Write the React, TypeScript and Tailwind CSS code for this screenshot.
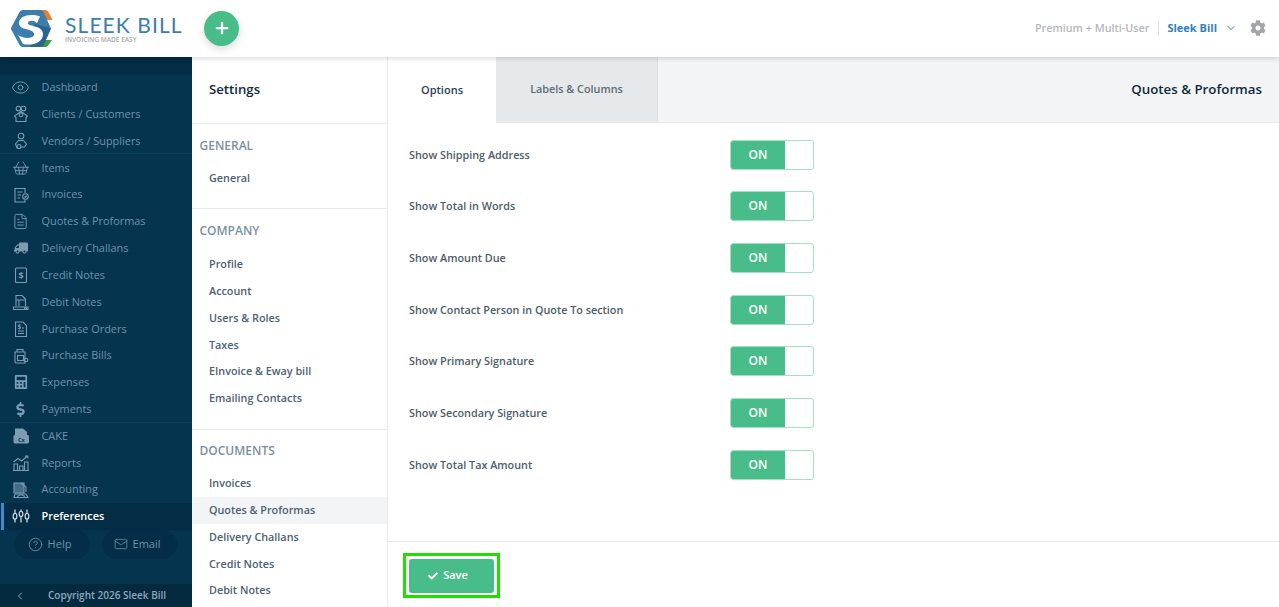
import React from "react";
import { Eye, ShoppingBasket, FileText, CircleHelp, Mail, ChevronDown, ChevronLeft, Plus } from "lucide-react";
import { FaCalculator, FaCheck, FaCog, FaDollarSign, FaTruck } from "react-icons/fa";

const S = { width: 18, height: 18, viewBox: "0 0 18 18", fill: "none", stroke: "currentColor", strokeWidth: 1.1 } as const;

const Clients = () => (
  <svg {...S}><circle cx="6.5" cy="3.5" r="2.3" /><circle cx="11.5" cy="3.5" r="2.3" /><path d="M9 6.5 L15.5 11 L14 12.5 V16.5 H4 V12.5 L2.5 11 Z" /><circle cx="9" cy="9.8" r="1.9" /></svg>
);
const Vendors = () => (
  <svg {...S}><circle cx="9" cy="4" r="2.8" /><path d="M5 16 L3.5 12 L6.5 8.5 H11.5 L14.5 12 L12.5 15 H9" /><circle cx="7" cy="14.5" r="2" /></svg>
);
const InvoiceIc = () => (
  <svg {...S}><path d="M13 7 V2.5 H3 V16 H13 V14" /><path d="M5.5 6 H10.5 M5.5 9 H9 M5.5 12 H8" /><circle cx="13.5" cy="10.5" r="2.8" /><path d="M12.3 10.5 L13.3 11.5 L14.8 9.7" /></svg>
);
const Dollar = () => (
  <svg {...S}><rect x="3.5" y="2" width="11" height="14.5" rx="1" /><text x="9" y="13" textAnchor="middle" fontSize="9" fontWeight="700" fill="currentColor" stroke="none" fontFamily="Open Sans, sans-serif">$</text></svg>
);
const Debit = () => (
  <svg {...S}><path d="M4 13 V2.5 H10 L13.5 6 V13" /><path d="M4 7 H13.5 M7 7 V13" /><path d="M1.5 14 H16 V16.5 H1.5 Z" /><circle cx="13.5" cy="15.2" r="1" /></svg>
);
const Orders = () => (
  <svg {...S}><path d="M3.5 2 H11 L14.5 5.5 V16.5 H3.5 Z" /><text x="7.4" y="9.3" textAnchor="middle" fontSize="6.5" fontWeight="700" fill="currentColor" stroke="none" fontFamily="Open Sans, sans-serif">$</text><path d="M6 11 H12 M6 13.5 H12 M10 8 H12" /></svg>
);
const Bills = () => (
  <svg {...S}><path d="M3 5 H13 V16 H4 L3 15 Z" /><path d="M5 5 V2.5 H8 M11 5 V2.5 H8" /><rect x="5.5" y="8.5" width="6" height="5" /><circle cx="14" cy="13" r="1.8" /></svg>
);
const Cake = () => (
  <svg width="18" height="18" viewBox="0 0 18 18"><path d="M3 1.5 H11 L15 5 V9 H3 Z" fill="currentColor" /><rect x="1.5" y="8" width="15.5" height="8.5" rx="1.4" fill="currentColor" /><text x="9.3" y="14.5" textAnchor="middle" fontSize="5.5" fontWeight="700" fill="#05344f" fontFamily="Open Sans, sans-serif">Cx</text></svg>
);
const Reports = () => (
  <svg {...S}><path d="M1 16.5 H17" /><path d="M2 16 V10 H5.5 V16 M7.5 16 V12 H11 V16 M12.5 16 V8 H16 V16" /><path d="M1.5 8 L6 4.5 L9.5 7 L15.5 2 M13 2 H15.8 V4.5" /></svg>
);
const Accounting = () => (
  <svg {...S}><path d="M2 2 H12 V12 H2 Z" fill="currentColor" fillOpacity={0.55} /><path d="M9 2 L14 6 V11" /><path d="M3 13 H14 L16 16.5 H2 Z" /><path d="M5 15.5 L9 13.5 L13 15.5" /></svg>
);
const Prefs = () => (
  <svg width="18" height="18" viewBox="0 0 18 18" fill="none" stroke="currentColor" strokeWidth="1.2"><path d="M3 2.5 V15.5 M9 2.5 V15.5 M15 2.5 V15.5" /><rect x="1.2" y="6.5" width="3.6" height="5.5" rx="1.7" fill="#042d45" /><rect x="7.2" y="4.5" width="3.6" height="5" rx="1.7" fill="#042d45" /><rect x="13.2" y="6.5" width="3.6" height="5.5" rx="1.7" fill="#042d45" /></svg>
);

const nav: { label: string; icon: React.ReactNode; divider?: boolean; active?: boolean }[] = [
  { label: "Dashboard", icon: <Eye size={19} strokeWidth={1.2} /> },
  { label: "Clients / Customers", icon: <Clients /> },
  { label: "Vendors / Suppliers", icon: <Vendors />, divider: true },
  { label: "Items", icon: <ShoppingBasket size={18} strokeWidth={1.2} /> },
  { label: "Invoices", icon: <InvoiceIc /> },
  { label: "Quotes & Proformas", icon: <FileText size={17} strokeWidth={1.3} /> },
  { label: "Delivery Challans", icon: <FaTruck size={14} style={{ transform: "scaleX(-1)" }} /> },
  { label: "Credit Notes", icon: <Dollar /> },
  { label: "Debit Notes", icon: <Debit /> },
  { label: "Purchase Orders", icon: <Orders /> },
  { label: "Purchase Bills", icon: <Bills /> },
  { label: "Expenses", icon: <FaCalculator size={14} /> },
  { label: "Payments", icon: <FaDollarSign size={15} />, divider: true },
  { label: "CAKE", icon: <Cake /> },
  { label: "Reports", icon: <Reports /> },
  { label: "Accounting", icon: <Accounting /> },
  { label: "Preferences", icon: <Prefs />, active: true },
];

const groups: { title: string; items: string[]; h: string; pt: string; gap: string }[] = [
  { title: "GENERAL", items: ["General"], h: "h-[85px]", pt: "pt-[13px]", gap: "mb-[10px]" },
  { title: "COMPANY", items: ["Profile", "Account", "Users & Roles", "Taxes", "EInvoice & Eway bill", "Emailing Contacts"], h: "h-[221px]", pt: "pt-[13px]", gap: "mb-[11px]" },
  { title: "DOCUMENTS", items: ["Invoices", "Quotes & Proformas", "Delivery Challans", "Credit Notes", "Debit Notes"], h: "", pt: "pt-[12px]", gap: "mb-[10px]" },
];

const options = [
  "Show Shipping Address",
  "Show Total in Words",
  "Show Amount Due",
  "Show Contact Person in Quote To section",
  "Show Primary Signature",
  "Show Secondary Signature",
  "Show Total Tax Amount",
];

const Logo = () => (
  <svg width="43" height="39" viewBox="0 0 43 39">
    <path d="M30 1 H35 C37 1 38 2 39 4 L42.5 11 H33 Z" fill="#e87d2f" />
    <path d="M31 31 H42 L38.5 36 C37.5 37.5 36.5 38 35 38 H29 Z" fill="#3f9a45" />
    <path d="M13 1 H30 C32 1 33 2 34 4 L41 19.5 L34 35 C33 37 32 38 30 38 H13 C11 38 10 37 9 35 L1.5 21 C0.8 20 0.8 19 1.5 18 L9 4 C10 2 11 1 13 1 Z" fill="#3b7dab" />
    <path d="M25 15 L41 19.5 L34 35 C33 37 32 38 30 38 H20 Z" fill="#2c6490" />
    <path d="M30 7.5 C20 4 9 7 9 14 C9 22 24 19 24 25 C24 30 14 30 8 26 L13 35 C22 37 33 34 33 25 C33 16 18 18 18 14 C18 11 24 11 27 14 Z" fill="#fff" />
  </svg>
);

export default function App() {
  return (
    <div className="h-[607px] w-[1279px] overflow-hidden bg-white flex flex-col text-[10.8px] font-semibold" style={{ fontFamily: '"Open Sans", sans-serif' }}>
      <header className="relative z-10 h-[57px] shrink-0 bg-white shadow-[0_1px_5px_rgba(0,0,0,0.18)] flex items-center pb-[1px]">
        <div className="ml-[10px] flex items-center">
          <Logo />
          <div className="ml-[12px] w-[118px] leading-none">
            <div className="text-[21px] font-normal text-[#3b7dab] whitespace-nowrap tracking-[1.1px] leading-[22px]" style={{ fontFamily: '"Lato", sans-serif' }}>SLEEK BILL</div>
            <div className="text-[6.5px] font-semibold text-[#a5a8ab] whitespace-nowrap leading-[7px]">INVOICING MADE EASY</div>
          </div>
        </div>
        <button className="ml-[21px] w-[35px] h-[35px] rounded-full bg-[#48bd8a] text-white flex items-center justify-center shadow-[0_3px_8px_rgba(0,0,0,0.15)]">
          <Plus size={18} strokeWidth={3} />
        </button>
        <div className="ml-auto flex items-center pr-[13px]">
          <span className="text-[#b4b8bb] text-[10.8px] font-semibold">Premium + Multi-User</span>
          <span className="ml-[9px] h-[15px] w-px bg-[#dfe2e5]" />
          <span className="ml-[8px] text-[#2f7fbc] text-[11px] font-bold">Sleek Bill</span>
          <ChevronDown size={12} className="ml-[8px] text-[#2f7fbc]" />
          <FaCog size={16} className="ml-[13px] text-[#a3a6a9]" />
        </div>
      </header>

      <div className="flex flex-1 min-h-0">
        <aside className="w-[192px] shrink-0 bg-[#05344f] flex flex-col relative">
          <div className="h-[17px] shrink-0 bg-[#042c44]" />
          {nav.map((n) => (
            <div key={n.label} className={`h-[26.82px] shrink-0 flex items-center relative ${n.active ? "bg-[#042d45] text-white" : "text-[#6f93ad]"}`}>
              {n.active && <span className="absolute left-[1px] top-0 bottom-0 w-[3px] bg-[#3a8ecb]" />}
              <span className={`w-[41.5px] flex items-center justify-center ${n.active ? "text-[#dbe5ec]" : "text-[#7d9cb3]"}`}>{n.icon}</span>
              <span className={`text-[10.9px] ${n.active ? "font-semibold" : "font-normal"}`}>{n.label}</span>
              {n.divider && <span className="absolute left-0 right-0 bottom-0 h-px bg-[#0b405e]" />}
            </div>
          ))}
          <div className="flex gap-[12px] pl-[14px]">
            <button className="w-[76px] h-[29px] rounded-full bg-[#042e47] text-[#6f93ad] flex items-center justify-center gap-[5px] pr-[5px] font-normal text-[11px]">
              <CircleHelp size={15} strokeWidth={1.4} /> Help
            </button>
            <button className="w-[75px] h-[29px] rounded-full bg-[#042e47] text-[#6f93ad] flex items-center justify-center gap-[5px] pr-[5px] font-normal text-[11px]">
              <Mail size={14} strokeWidth={1.3} /> Email
            </button>
          </div>
          <div className="mt-auto h-[23px] bg-[#042a40] text-[#90a9bb] flex items-center text-[10px] font-semibold">
            <ChevronLeft size={12} className="ml-[14px] text-[#90a9bb]" />
            <span className="ml-[22px]">Copyright 2026 Sleek Bill</span>
          </div>
        </aside>

        <nav className="w-[196px] shrink-0 border-r border-[#e8eaec] bg-white overflow-hidden">
          <div className="h-[67px] border-b border-[#e8eaec] flex items-center pl-[17px] pb-[1px] text-[13.2px] font-semibold text-[#10293c]">Settings</div>
          {groups.map((g, i) => (
            <div key={g.title} className={`${g.h} ${g.pt} ${i < 2 ? "border-b border-[#e8eaec]" : ""}`}>
              <div className={`pl-[7.5px] text-[12px] font-semibold text-[#7b8f9f] leading-[18px] ${g.gap}`}>{g.title}</div>
              {g.items.map((it) => (
                <div key={it} className={`h-[26.75px] pl-[17px] flex items-center text-[#4c6173] ${it === "Quotes & Proformas" ? "bg-[#f3f4f6]" : ""}`}>{it}</div>
              ))}
            </div>
          ))}
        </nav>

        <main className="flex-1 min-w-0 flex flex-col">
          <div className="h-[66px] shrink-0 flex border-b border-[#e8eaec] bg-[#f3f4f6]">
            <div className="w-[108px] -mb-px bg-white flex items-center justify-center text-[#293f50] font-semibold text-[11px]">Options</div>
            <div className="w-[162px] bg-[#e6e9ec] border-r border-[#dcdfe2] flex items-center justify-center text-[#5f6b74] text-[10.8px]">Labels &amp; Columns</div>
            <div className="ml-auto pr-[17px] flex items-center text-[13.3px] font-semibold text-[#10293c]">Quotes &amp; Proformas</div>
          </div>
          <div className="flex-1 pt-[5.8px] pl-[21px]">
            {options.map((o) => (
              <div key={o} className="h-[51.7px] flex items-center">
                <span className="w-[321px] text-[#4c5c68] text-[10.8px] font-semibold">{o}</span>
                <div className="w-[84px] h-[30px] rounded-[3px] border border-[#a3e3c5] flex overflow-hidden bg-white">
                  <div className="w-[54px] bg-[#48bd8a] text-white text-[12px] font-semibold flex items-center justify-center">ON</div>
                </div>
              </div>
            ))}
          </div>
          <div className="h-[66px] shrink-0 border-t border-[#e8eaec] pl-[15px] pt-[11px]">
            <div className="w-[97px] h-[45px] border-[3px] border-[#1ee000] flex items-center justify-center">
              <button className="w-[85px] h-[34px] rounded-[3px] bg-[#48bd8a] text-white text-[11px] font-semibold flex items-center justify-center gap-[5px] pr-[7px]">
                <FaCheck size={10} /> Save
              </button>
            </div>
          </div>
        </main>
      </div>
    </div>
  );
}
